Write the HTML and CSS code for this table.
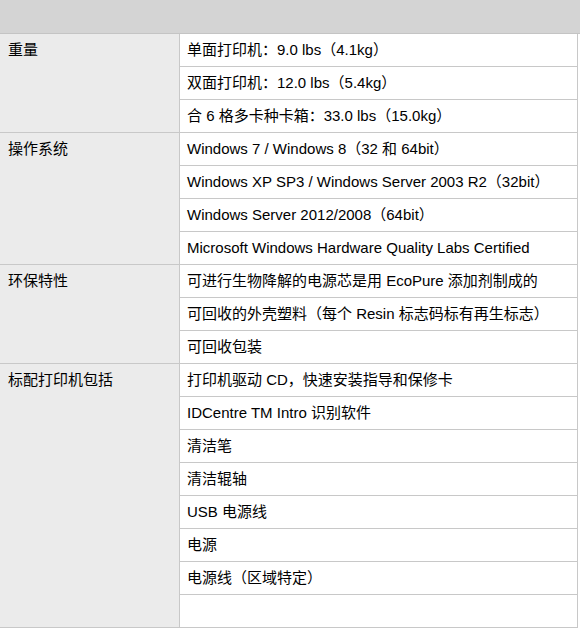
FILE: index.html
```html
<!DOCTYPE html>
<html lang="zh-CN">
<head>
<meta charset="utf-8">
<title>规格</title>
<link rel="stylesheet" href="styles.css">
</head>
<body>
<div class="page">
  <div class="head"></div>
  <div class="spec">
    <div class="group">
      <div class="label">重量</div>
      <div class="values">
        <div class="val">单面打印机：9.0 lbs（4.1kg）</div>
        <div class="val">双面打印机：12.0 lbs（5.4kg）</div>
        <div class="val">合 6 格多卡种卡箱：33.0 lbs（15.0kg）</div>
      </div>
    </div>
    <div class="group">
      <div class="label">操作系统</div>
      <div class="values">
        <div class="val">Windows 7 / Windows 8（32 和 64bit）</div>
        <div class="val">Windows XP SP3 / Windows Server 2003 R2（32bit）</div>
        <div class="val">Windows Server 2012/2008（64bit）</div>
        <div class="val">Microsoft Windows Hardware Quality Labs Certified</div>
      </div>
    </div>
    <div class="group">
      <div class="label">环保特性</div>
      <div class="values">
        <div class="val">可进行生物降解的电源芯是用 EcoPure 添加剂制成的</div>
        <div class="val">可回收的外壳塑料（每个 Resin 标志码标有再生标志）</div>
        <div class="val">可回收包装</div>
      </div>
    </div>
    <div class="group">
      <div class="label">标配打印机包括</div>
      <div class="values">
        <div class="val">打印机驱动 CD，快速安装指导和保修卡</div>
        <div class="val">IDCentre TM Intro 识别软件</div>
        <div class="val">清洁笔</div>
        <div class="val">清洁辊轴</div>
        <div class="val">USB 电源线</div>
        <div class="val">电源</div>
        <div class="val">电源线（区域特定）</div>
        <div class="val"></div>
      </div>
    </div>
  </div>
</div>
</body>
</html>
```
FILE: styles.css
```css
html, body {
  margin: 0;
  padding: 0;
  background: #ffffff;
}
.page {
  width: 580px;
  font-family: "Liberation Sans", "Noto Sans CJK SC", sans-serif;
  font-size: 15px;
  color: #000000;
}
.head {
  height: 34px;
  box-sizing: border-box;
  background: #d4d4d4;
  border-bottom: 1px solid #c4c4c4;
}
.spec {
  width: 578px;
}
.group {
  display: flex;
}
.label {
  width: 180px;
  flex: none;
  box-sizing: border-box;
  background: #ebebeb;
  border-right: 1px solid #c8c8c8;
  border-bottom: 1px solid #c8c8c8;
  padding: 0 8px;
  line-height: 32px;
}
.values {
  flex: 1;
}
.val {
  height: 33px;
  box-sizing: border-box;
  line-height: 32px;
  padding: 0 7px;
  border-bottom: 1px solid #c8c8c8;
  border-right: 1px solid #c8c8c8;
  white-space: nowrap;
}
```
